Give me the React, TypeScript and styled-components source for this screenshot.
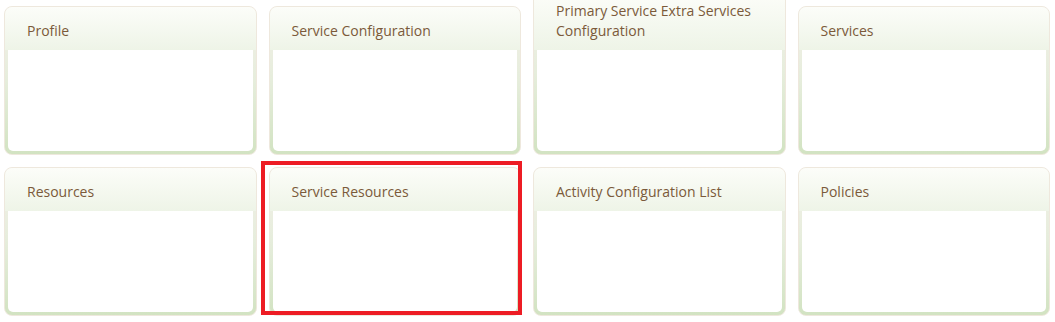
import React from 'react'
import styled, { createGlobalStyle } from 'styled-components'

const GlobalStyle = createGlobalStyle`
	html, body {
		margin: 0;
		padding: 0;
		background: #ffffff;
		font-family: 'Open Sans', 'Noto Sans', sans-serif;
	}
`

const Grid = styled.div`
	display: grid;
	grid-template-columns: repeat(4, 1fr);
	grid-auto-rows: 149px;
	column-gap: 12px;
	row-gap: 12px;
	align-items: end;
	padding: 6px 5px 0 4px;
	width: 1055px;
	box-sizing: border-box;
`

const Cell = styled.div<{ $selected?: boolean }>`
	position: relative;
	height: 149px;
	align-self: end;

	${({ $selected }) =>
		$selected &&
		`
		&::after {
			content: '';
			position: absolute;
			left: -8px;
			top: -6px;
			right: -1px;
			bottom: 1px;
			border: 4px solid #ed1c24;
			pointer-events: none;
		}
	`}
`

const Card = styled.div`
	position: absolute;
	left: 0;
	right: 0;
	bottom: 0;
	display: flex;
	flex-direction: column;
	border: 1px solid #eee8dd;
	border-radius: 8px;
	background: linear-gradient(to bottom, #f3f0e8 0%, #e6eddc 50%, #d2e3c2 100%);
	box-sizing: border-box;
	overflow: hidden;
`

const Header = styled.div`
	display: flex;
	align-items: flex-end;
	min-height: 43px;
	padding: 8px 8px 9px 22px;
	background: linear-gradient(to bottom, #fcfdf9 0%, #eef4e7 100%);
	color: #7b5a3a;
	font-size: 14px;
	line-height: 20px;
	box-sizing: border-box;
`

const Body = styled.div`
	height: 101px;
	margin: 0 3px 3px 3px;
	background: #ffffff;
	border-radius: 0 0 5px 5px;
`

const tiles = [
	'Profile',
	'Service Configuration',
	'Primary Service Extra Services Configuration',
	'Services',
	'Resources',
	'Service Resources',
	'Activity Configuration List',
	'Policies'
]

const App = () => {
	return (
		<>
			<GlobalStyle />
			<Grid>
				{tiles.map((title) => (
					<Cell key={title} $selected={title === 'Service Resources'}>
						<Card>
							<Header>{title}</Header>
							<Body />
						</Card>
					</Cell>
				))}
			</Grid>
		</>
	)
}

export default App
